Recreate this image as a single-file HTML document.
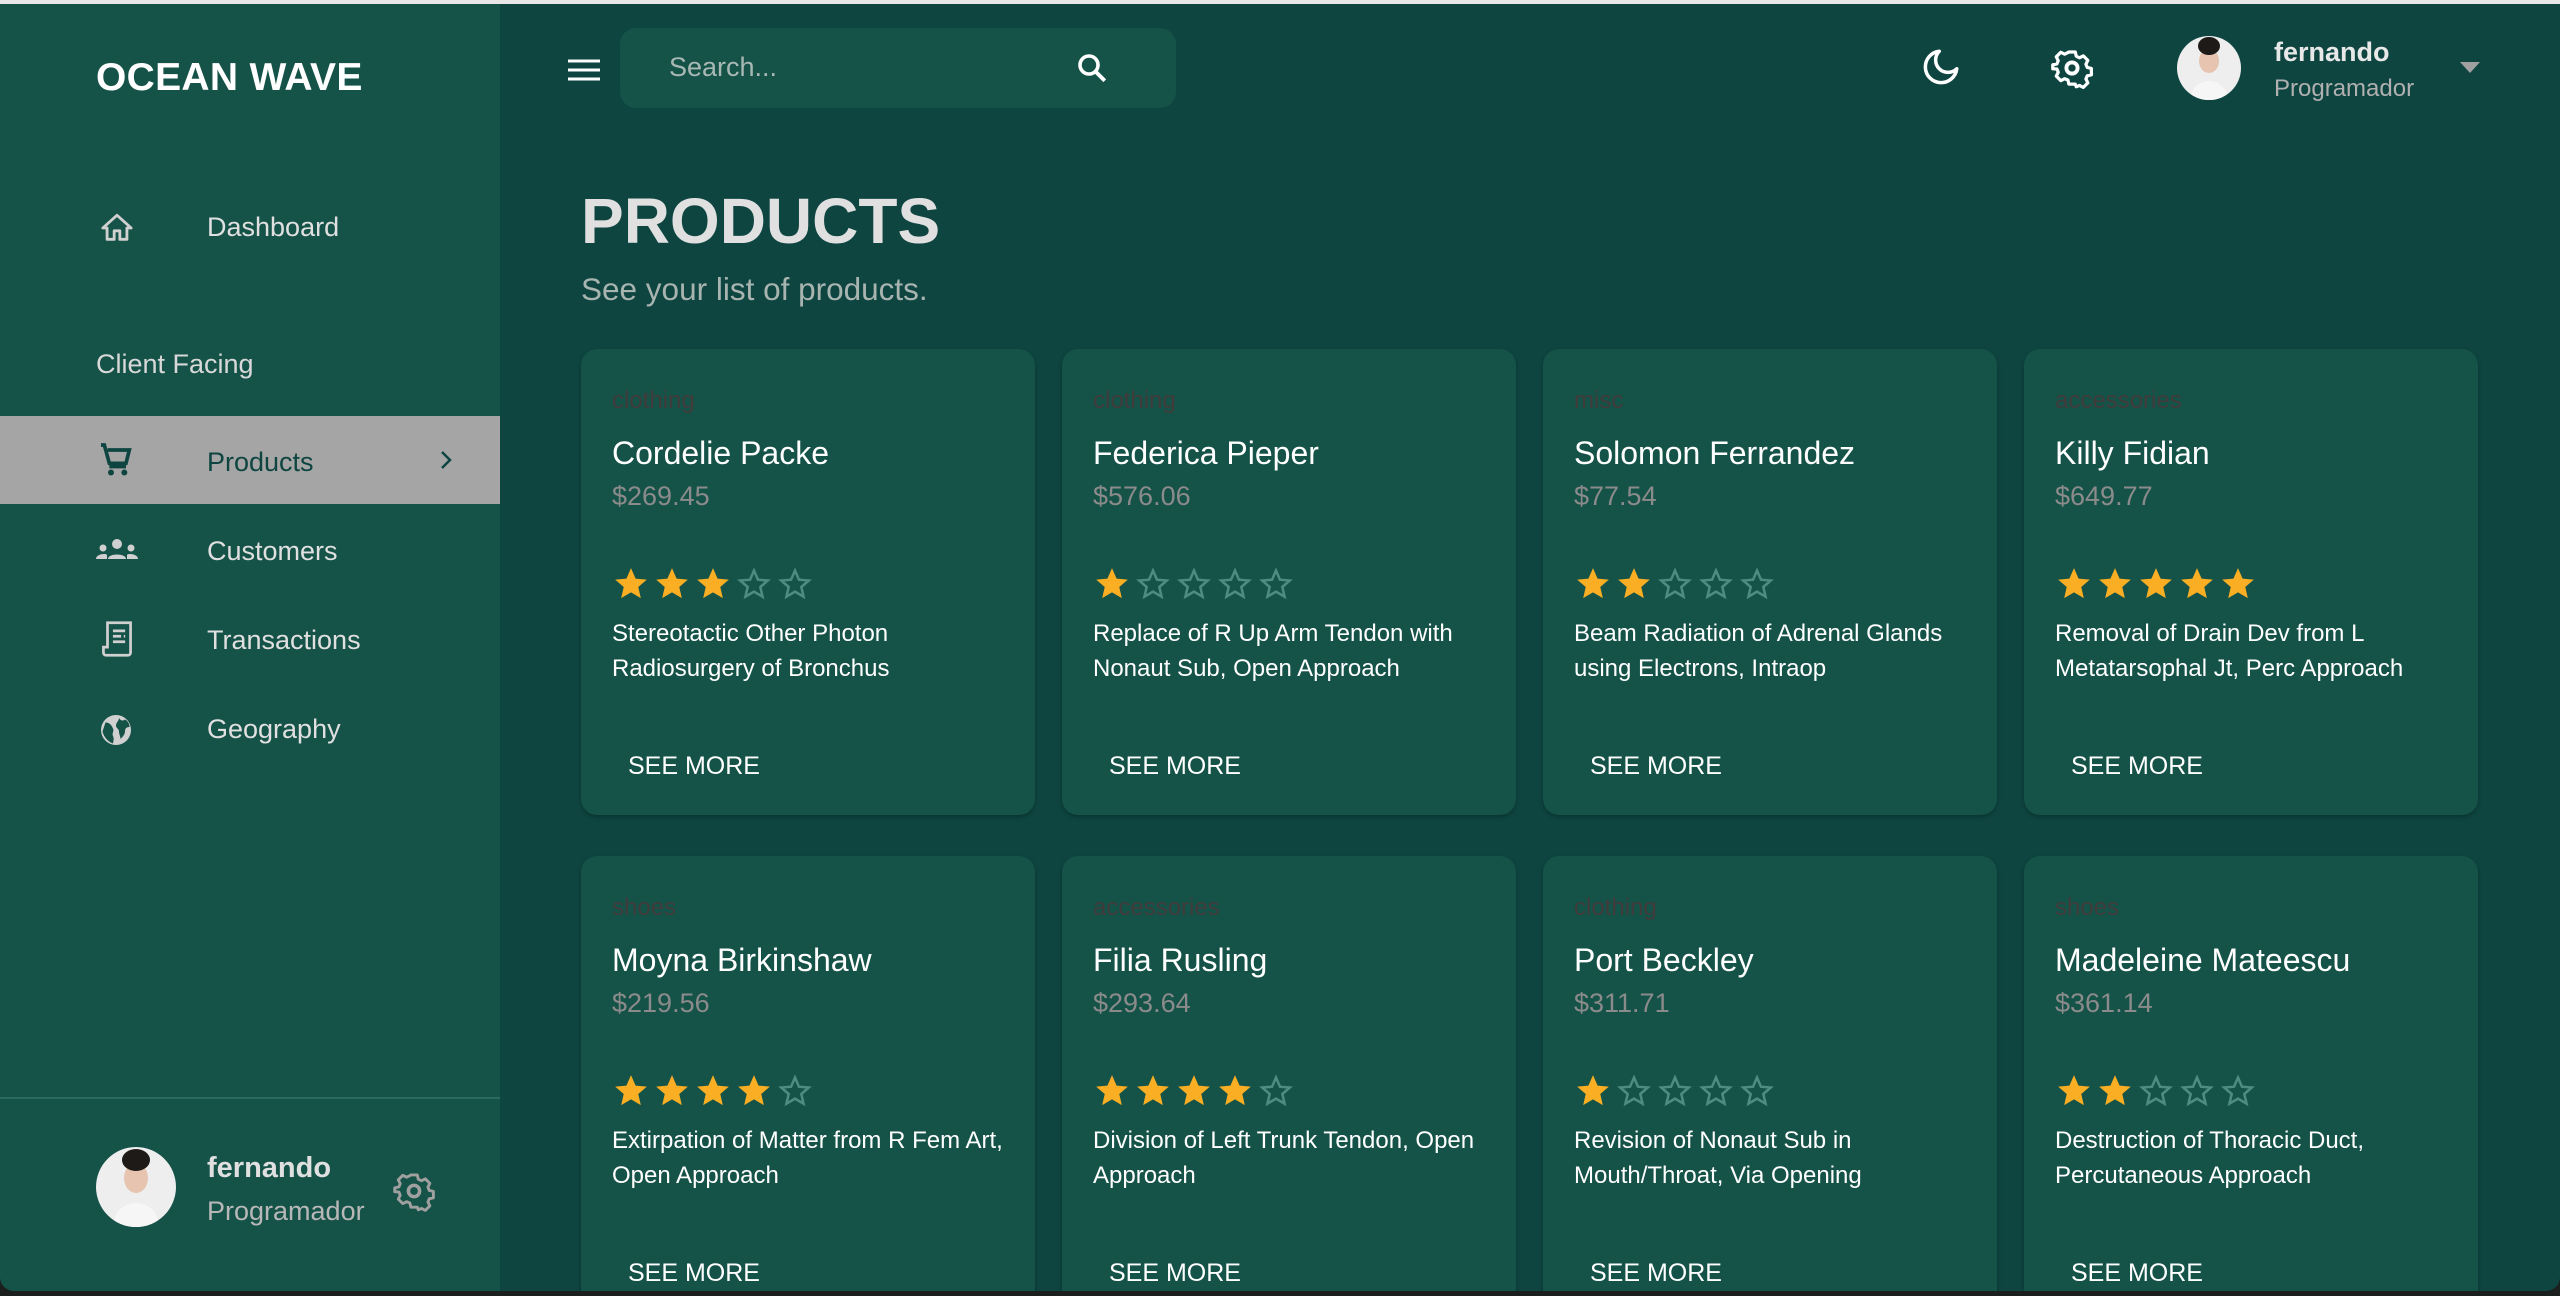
<!DOCTYPE html>
<html><head><meta charset="utf-8"><style>
*{margin:0;padding:0;box-sizing:border-box}
html,body{width:2560px;height:1296px;overflow:hidden;background:#1b1f1e;font-family:"Liberation Sans",sans-serif}
#win{position:absolute;left:0;top:4px;width:2560px;height:1287px;background:#0e4540;border-radius:0 0 14px 14px;overflow:hidden}
#topline{position:absolute;left:0;top:0;width:2560px;height:4px;background:#e8e8e8}
#side{position:absolute;left:0;top:0;width:500px;height:1287px;background:#155248}
.abs{position:absolute;white-space:nowrap}
.logo{left:96px;top:52px;font-size:39px;font-weight:bold;color:#fff;letter-spacing:0.3px}
.nav{font-size:27px;color:#e0e0e0}
.ic{position:absolute}
.card{position:absolute;width:454px;height:466px;background:#155248;border-radius:16px;box-shadow:0 2px 4px rgba(0,0,0,.25)}
.card .cat{position:absolute;left:31px;top:38px;font-size:24px;color:#413b3b}
.card .nm{position:absolute;left:31px;top:86px;font-size:32px;color:#fff}
.card .pr{position:absolute;left:31px;top:132px;font-size:27px;color:#8b8b8b}
.card .st{position:absolute;left:31px;top:216px;display:flex;gap:3px}
.card .ds{position:absolute;left:31px;top:267px;font-size:24px;line-height:35px;color:#fff;width:410px}
.card .sm{position:absolute;left:47px;top:403px;font-size:25px;color:#fff}
</style></head><body>
<div id="topline"></div>
<div id="win">
<div id="side">
 <div class="abs logo">OCEAN WAVE</div>
 <svg class="ic" style="left:100px;top:207px" width="34" height="34" viewBox="0 0 24 24"><path d="M12 3L2 12h3v8h5v-6h4v6h5v-8h3z" fill="none" stroke="#d0d0d0" stroke-width="2" stroke-linejoin="round"/></svg>
 <div class="abs nav" style="left:207px;top:208px">Dashboard</div>
 <div class="abs nav" style="left:96px;top:345px;color:#d8d8d8">Client Facing</div>
 <div style="position:absolute;left:0;top:412px;width:500px;height:88px;background:#a5a5a5"></div>
 <svg class="ic" style="left:96px;top:436px" width="40" height="40" viewBox="0 0 24 24"><path d="M3 3h2l3 11h10l2-8H7" fill="none" stroke="#0e4540" stroke-width="2.2"/><circle cx="9" cy="19.5" r="1.8" fill="#0e4540"/><circle cx="17" cy="19.5" r="1.8" fill="#0e4540"/><path d="M8 16h10" stroke="#0e4540" stroke-width="2"/></svg>
 <div class="abs nav" style="left:207px;top:443px;color:#0e4540">Products</div>
 <svg class="ic" style="left:434px;top:444px" width="24" height="24" viewBox="0 0 24 24"><path d="M8 4l8 8-8 8" fill="none" stroke="#0e4540" stroke-width="2.5"/></svg>
 <svg class="ic" style="left:96px;top:533px" width="42" height="26" viewBox="0 0 42 26"><circle cx="21" cy="7" r="5" fill="#d0d0d0"/><path d="M12 22c0-6 18-6 18 0z" fill="#d0d0d0"/><circle cx="7" cy="11" r="3.5" fill="#d0d0d0"/><circle cx="35" cy="11" r="3.5" fill="#d0d0d0"/><path d="M0 22c0-5 10-6 11-4v4zM42 22c0-5-10-6-11-4v4z" fill="#d0d0d0"/></svg>
 <div class="abs nav" style="left:207px;top:532px">Customers</div>
 <svg class="ic" style="left:100px;top:616px" width="34" height="38" viewBox="0 0 24 28"><path d="M5 2v18H2v4a2 2 0 002 2h16a2 2 0 002-2V2z" fill="none" stroke="#d0d0d0" stroke-width="2"/><path d="M9 8h9M9 12h6M17 12h1M9 16h9" stroke="#d0d0d0" stroke-width="2"/></svg>
 <div class="abs nav" style="left:207px;top:621px">Transactions</div>
 <svg class="ic" style="left:98px;top:708px" width="36" height="36" viewBox="0 0 24 24"><circle cx="12" cy="12" r="10" fill="#d0d0d0"/><path d="M5 7c3 0 4 2 5 4s-1 3 0 5 0 4 0 5c-3-1-6-4-7-8zM14 4c1 2 3 2 4 1 2 1 3 3 3 5-2 0-3 1-3 3s-2 4-3 5c0-2-1-3-1-5s-2-2-2-4 2-3 2-5z" fill="#155248"/></svg>
 <div class="abs nav" style="left:207px;top:710px">Geography</div>
 <div style="position:absolute;left:0;top:1093px;width:500px;height:2px;background:#2a6a60"></div>
 <div style="position:absolute;left:96px;top:1143px;width:80px;height:80px;border-radius:50%;background:#eee;overflow:hidden"><div style="position:absolute;left:28px;top:16px;width:24px;height:30px;border-radius:50%;background:#e6c4b0"></div><div style="position:absolute;left:26px;top:2px;width:28px;height:22px;border-radius:50%;background:#1d1a18"></div><div style="position:absolute;left:18px;top:56px;width:44px;height:40px;border-radius:50%;background:#f6f6f6"></div></div>
 <div class="abs" style="left:207px;top:1148px;font-size:29px;font-weight:bold;color:#e0e0e0">fernando</div>
 <div class="abs" style="left:207px;top:1192px;font-size:27px;color:#b8b8b8">Programador</div>
 <svg class="ic" style="left:393px;top:1166px" width="42" height="42" viewBox="0 0 24 24"><path d="M10 2h4l.6 2.6 2 1 2.4-1.2 2.8 2.8-1.2 2.4.8 2 2.6.6v4l-2.6.6-.8 2 1.2 2.4-2.8 2.8-2.4-1.2-2 .8L14 22h-4l-.6-2.6-2-.8-2.4 1.2-2.8-2.8 1.2-2.4-.8-2L0 12.4V10l2.6-.6.8-2-1.2-2.4L5 2.2l2.4 1.2 2-1z" transform="translate(1 1) scale(.92)" fill="none" stroke="#a0a0a0" stroke-width="1.8" stroke-linejoin="round"/><circle cx="12" cy="12" r="3.2" fill="none" stroke="#a0a0a0" stroke-width="2"/></svg>
</div>
<svg class="ic" style="left:568px;top:54px" width="32" height="24" viewBox="0 0 32 24"><path d="M0 3h32M0 12h32M0 21h32" stroke="#fff" stroke-width="3"/></svg>
<div style="position:absolute;left:620px;top:24px;width:556px;height:80px;background:#155248;border-radius:16px"></div>
<div class="abs" style="left:669px;top:48px;font-size:27px;color:#a8b8b4">Search...</div>
<svg class="ic" style="left:1074px;top:46px" width="36" height="36" viewBox="0 0 24 24"><circle cx="10" cy="10" r="6" fill="none" stroke="#fff" stroke-width="2.4"/><path d="M14.5 14.5l6 6" stroke="#fff" stroke-width="2.6"/></svg>
<svg class="ic" style="left:1920px;top:42px" width="42" height="42" viewBox="0 0 24 24"><path d="M11 3a9 9 0 1010 10A7 7 0 0111 3z" fill="none" stroke="#fff" stroke-width="2" stroke-linejoin="round"/></svg>
<svg class="ic" style="left:2051px;top:43px" width="42" height="42" viewBox="0 0 24 24"><path d="M10 2h4l.6 2.6 2 1 2.4-1.2 2.8 2.8-1.2 2.4.8 2 2.6.6v4l-2.6.6-.8 2 1.2 2.4-2.8 2.8-2.4-1.2-2 .8L14 22h-4l-.6-2.6-2-.8-2.4 1.2-2.8-2.8 1.2-2.4-.8-2L0 12.4V10l2.6-.6.8-2-1.2-2.4L5 2.2l2.4 1.2 2-1z" transform="translate(1 1) scale(.92)" fill="none" stroke="#fff" stroke-width="2" stroke-linejoin="round"/><circle cx="12" cy="12" r="3.2" fill="none" stroke="#fff" stroke-width="2.2"/></svg>
<div style="position:absolute;left:2177px;top:32px;width:64px;height:64px;border-radius:50%;background:#eee;overflow:hidden"><div style="position:absolute;left:22px;top:13px;width:20px;height:24px;border-radius:50%;background:#e6c4b0"></div><div style="position:absolute;left:21px;top:1px;width:22px;height:18px;border-radius:50%;background:#1d1a18"></div><div style="position:absolute;left:14px;top:45px;width:36px;height:32px;border-radius:50%;background:#f6f6f6"></div></div>
<div class="abs" style="left:2274px;top:33px;font-size:27px;font-weight:bold;color:#e8e8e8">fernando</div>
<div class="abs" style="left:2274px;top:71px;font-size:24px;color:#b0b0b0">Programador</div>
<svg class="ic" style="left:2460px;top:58px" width="20" height="12" viewBox="0 0 20 12"><path d="M0 0h20L10 11z" fill="#a0a0a0"/></svg>
<div class="abs" style="left:581px;top:180px;font-size:64px;font-weight:bold;color:#e0e0e0">PRODUCTS</div>
<div class="abs" style="left:581px;top:267px;font-size:31.5px;color:#a8b4b0">See your list of products.</div>
<div id="cards"></div>
</div>
<script>
var d=[["clothing","Cordelie Packe","$269.45",3,"Stereotactic Other Photon<br>Radiosurgery of Bronchus"],
["clothing","Federica Pieper","$576.06",1,"Replace of R Up Arm Tendon with<br>Nonaut Sub, Open Approach"],
["misc","Solomon Ferrandez","$77.54",2,"Beam Radiation of Adrenal Glands<br>using Electrons, Intraop"],
["accessories","Killy Fidian","$649.77",5,"Removal of Drain Dev from L<br>Metatarsophal Jt, Perc Approach"],
["shoes","Moyna Birkinshaw","$219.56",4,"Extirpation of Matter from R Fem Art,<br>Open Approach"],
["accessories","Filia Rusling","$293.64",4,"Division of Left Trunk Tendon, Open<br>Approach"],
["clothing","Port Beckley","$311.71",1,"Revision of Nonaut Sub in<br>Mouth/Throat, Via Opening"],
["shoes","Madeleine Mateescu","$361.14",2,"Destruction of Thoracic Duct,<br>Percutaneous Approach"]];
var xs=[581,1062,1543,2024],ys=[345,852],h="";
var full='<svg width="38" height="38" viewBox="0 0 24 24"><path d="M12 2l2.9 6.6 7.1.6-5.4 4.7 1.6 7L12 17.3 5.8 20.9l1.6-7L2 9.2l7.1-.6z" fill="#f9ae23"/></svg>';
var emp='<svg width="38" height="38" viewBox="0 0 24 24"><path d="M12 3.5l2.5 5.8 6.2.5-4.7 4.1 1.4 6.1L12 16.8 6.6 20l1.4-6.1-4.7-4.1 6.2-.5z" fill="none" stroke="#4f8b82" stroke-width="1.6"/></svg>';
d.forEach(function(c,i){var s="";for(var k=0;k<5;k++)s+=k<c[3]?full:emp;
h+='<div class="card" style="left:'+xs[i%4]+'px;top:'+ys[Math.floor(i/4)]+'px"><div class="cat">'+c[0]+'</div><div class="nm">'+c[1]+'</div><div class="pr">'+c[2]+'</div><div class="st">'+s+'</div><div class="ds">'+c[4]+'</div><div class="sm">SEE MORE</div></div>';});
document.getElementById("cards").innerHTML=h;
</script>
</body></html>
